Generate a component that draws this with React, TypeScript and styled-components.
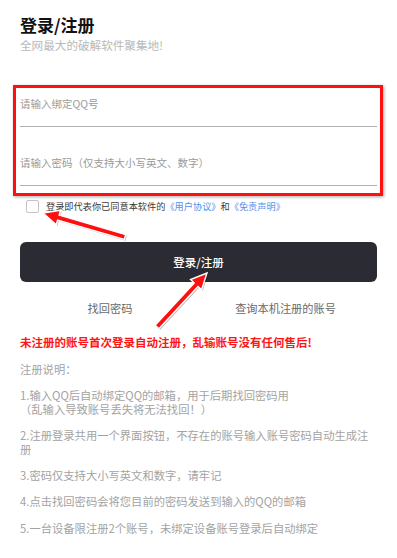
import React from "react";
import styled, { createGlobalStyle } from "styled-components";

const Global = createGlobalStyle`
  html, body { margin: 0; padding: 0; background: #fff; }
  body { font-family: "Noto Sans CJK SC", "Noto Sans", sans-serif; }
  * { box-sizing: border-box; }
`;

const Page = styled.div`
  position: relative;
  width: 397px;
  min-height: 558px;
  padding: 15px 20px 0 20px;
  overflow: hidden;
`;

const Title = styled.h1`
  margin: 0;
  font-size: 17px;
  line-height: 20px;
  font-weight: 700;
  color: #111;
`;

const Subtitle = styled.div`
  margin-top: 3px;
  font-size: 11.6px;
  line-height: 14px;
  color: #b9b9b9;
`;

const FormBox = styled.div`
  margin: 33px -6px 0 -7px;
  border: 3px solid #ff1010;
  box-shadow: 1px 1px 3px rgba(0, 0, 0, 0.35);
  padding: 0 3px 7px 4px;
`;

const Field = styled.div<{ $h: number }>`
  height: ${(p) => p.$h}px;
  display: flex;
  align-items: flex-end;
  padding-bottom: 15px;
  border-bottom: 1px solid #b0b0b0;
`;

const Placeholder = styled.span`
  font-size: 10.5px;
  line-height: 14px;
  color: #9a9a9a;
`;

const AgreeRow = styled.div`
  margin-top: 3px;
  display: flex;
  align-items: center;
  height: 14px;
  padding-left: 6px;
  gap: 7px;
`;

const Check = styled.span`
  width: 13px;
  height: 13px;
  border: 1px solid #c4c4c4;
  border-radius: 2px;
  background: #fff;
  flex: none;
`;

const AgreeText = styled.span`
  font-size: 9.2px;
  line-height: 14px;
  color: #3a3a3a;
  white-space: nowrap;
`;

const Link = styled.span`
  color: #5a8fe8;
`;

const MainButton = styled.button`
  display: flex;
  width: 100%;
  height: 40px;
  margin-top: 29px;
  border: none;
  border-radius: 6px;
  background: #2b2b33;
  color: #fff;
  font-family: inherit;
  font-size: 11.5px;
  font-weight: 500;
  align-items: center;
  justify-content: center;
  padding: 0;
`;

const LinkRow = styled.div`
  margin-top: 19px;
  display: grid;
  grid-template-columns: 180px 1fr;
  font-size: 11.2px;
  line-height: 14px;
  color: #6a6a6a;
`;

const SubLink = styled.span<{ $offset: number }>`
  justify-self: center;
  transform: translateX(${(p) => p.$offset}px);
`;

const Warning = styled.div`
  margin-top: 20px;
  font-size: 11.5px;
  line-height: 14px;
  font-weight: 700;
  color: #ff1515;
  white-space: nowrap;
`;

const Notes = styled.div`
  margin-top: 14px;
  font-size: 11.3px;
  line-height: 13.4px;
  color: #a3a3a3;
`;

const NoteLine = styled.p<{ $first?: boolean }>`
  margin: ${(p) => (p.$first ? "0" : "13px 0 0 0")};
`;

const Overlay = styled.svg`
  position: absolute;
  left: 0;
  top: 0;
  pointer-events: none;
`;

type Pt = [number, number];

function arrowPoints(tail: Pt, tip: Pt): string {
  const dx = tip[0] - tail[0];
  const dy = tip[1] - tail[1];
  const len = Math.hypot(dx, dy);
  const ux = dx / len;
  const uy = dy / len;
  const nx = -uy;
  const ny = ux;
  const w = 2.6;
  const h = 7.5;
  const L = 16;
  const bx = tip[0] - ux * L;
  const by = tip[1] - uy * L;
  const pts: Pt[] = [
    [tail[0] + nx * w, tail[1] + ny * w],
    [bx + nx * w, by + ny * w],
    [bx + nx * h, by + ny * h],
    [tip[0], tip[1]],
    [bx - nx * h, by - ny * h],
    [bx - nx * w, by - ny * w],
    [tail[0] - nx * w, tail[1] - ny * w],
  ];
  return pts.map((p) => `${p[0].toFixed(1)},${p[1].toFixed(1)}`).join(" ");
}

const Arrow: React.FC<{ tail: Pt; tip: Pt }> = ({ tail, tip }) => {
  const pts = arrowPoints(tail, tip);
  return (
    <g>
      <polygon points={pts} fill="rgba(0,0,0,0.25)" transform="translate(1.2,1.2)" />
      <polygon points={pts} fill="#ff1010" stroke="#fff" strokeWidth={1.4} strokeLinejoin="miter" />
    </g>
  );
};

export default function App() {
  return (
    <>
      <Global />
      <Page>
        <Title>登录/注册</Title>
        <Subtitle>全网最大的破解软件聚集地!</Subtitle>
        <FormBox>
          <Field $h={39}>
            <Placeholder>请输入绑定QQ号</Placeholder>
          </Field>
          <Field $h={59}>
            <Placeholder>请输入密码（仅支持大小写英文、数字）</Placeholder>
          </Field>
        </FormBox>
        <AgreeRow>
          <Check />
          <AgreeText>
            登录即代表你已同意本软件的<Link>《用户协议》</Link>和<Link>《免责声明》</Link>
          </AgreeText>
        </AgreeRow>
        <MainButton>登录/注册</MainButton>
        <LinkRow>
          <SubLink $offset={0}>找回密码</SubLink>
          <SubLink $offset={-3}>查询本机注册的账号</SubLink>
        </LinkRow>
        <Warning>未注册的账号首次登录自动注册，乱输账号没有任何售后!</Warning>
        <Notes>
          <NoteLine $first>注册说明：</NoteLine>
          <NoteLine>
            1.输入QQ后自动绑定QQ的邮箱，用于后期找回密码用
            <br />
            （乱输入导致账号丢失将无法找回！）
          </NoteLine>
          <NoteLine>2.注册登录共用一个界面按钮，不存在的账号输入账号密码自动生成注册</NoteLine>
          <NoteLine>3.密码仅支持大小写英文和数字，请牢记</NoteLine>
          <NoteLine>4.点击找回密码会将您目前的密码发送到输入的QQ的邮箱</NoteLine>
          <NoteLine>5.一台设备限注册2个账号，未绑定设备账号登录后自动绑定</NoteLine>
        </Notes>
        <Overlay width={397} height={558} viewBox="0 0 397 558">
          <Arrow tail={[125, 237]} tip={[43, 213]} />
          <Arrow tail={[157, 327]} tip={[207, 273]} />
        </Overlay>
      </Page>
    </>
  );
}
